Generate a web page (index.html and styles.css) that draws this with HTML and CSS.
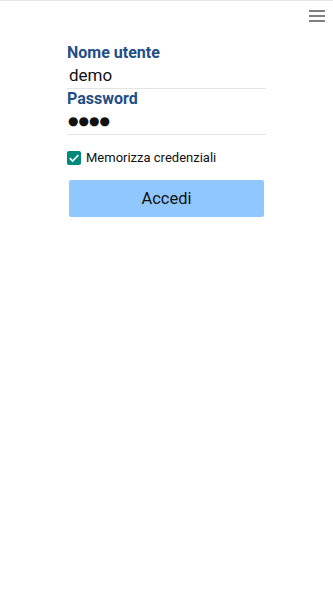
FILE: index.html
```html
<!DOCTYPE html>
<html lang="it">
<head>
<meta charset="utf-8">
<title>Login</title>
<link rel="stylesheet" href="styles.css">
</head>
<body>
<div class="topline"></div>
<header class="bar">
  <button class="menu" aria-label="Menu">
    <svg width="16" height="12" viewBox="0 0 16 12"><path d="M0 1h16M0 6h16M0 11h16" stroke="#555" stroke-width="1.6"/></svg>
  </button>
</header>
<main class="form">
  <label class="label" for="u">Nome utente</label>
  <input id="u" class="field" type="text" value="demo">
  <label class="label" for="p">Password</label>
  <input id="p" class="field pw" type="text" value="●●●●" aria-label="Password">
  <div class="remember">
    <span class="check"><svg width="14" height="14" viewBox="0 0 14 14"><path d="M2.8 7.2l2.8 2.8L11.4 4.2" fill="none" stroke="#fff" stroke-width="1.7"/></svg></span>
    <span class="remtext">Memorizza credenziali</span>
  </div>
  <button class="login">Accedi</button>
</main>
</body>
</html>
```
FILE: styles.css
```css
html, body {
  margin: 0;
  padding: 0;
  background: #fff;
  font-family: Roboto, "Noto Sans", sans-serif;
}
.topline {
  height: 1px;
  background: #e4e4e4;
}
.bar {
  display: flex;
  justify-content: flex-end;
  height: 28px;
}
.menu {
  border: 0;
  background: none;
  padding: 8px 8px 0 0;
  margin: 0;
  height: 22px;
}
.menu svg { display: block; }
.form {
  width: 199px;
  margin: 14px auto 0;
  display: flex;
  flex-direction: column;
}
.label {
  font-weight: 700;
  font-size: 16px;
  line-height: 19px;
  color: #1f4e87;
}
.field {
  border: 0;
  border-bottom: 1px solid #e3e3e3;
  outline: none;
  font-family: inherit;
  font-size: 17px;
  height: 26px;
  padding: 0 2px;
  margin: 0;
  color: #111;
  background: transparent;
}
.pw {
  font-family: "DejaVu Sans", sans-serif;
  font-size: 12px;
  height: 26px;
  padding-left: 1px;
}
.remember {
  display: flex;
  align-items: center;
  gap: 5px;
  margin: 15px 0 0 0;
  font-size: 13px;
  color: #111;
}
.check {
  width: 14px;
  height: 14px;
  border-radius: 2px;
  background: #00897b;
  display: flex;
}
.login {
  margin: 15px 2px 0;
  height: 37px;
  border: 0;
  border-radius: 2px;
  background: #90c7ff;
  font-family: inherit;
  font-size: 16.5px;
  color: #111;
}
```
